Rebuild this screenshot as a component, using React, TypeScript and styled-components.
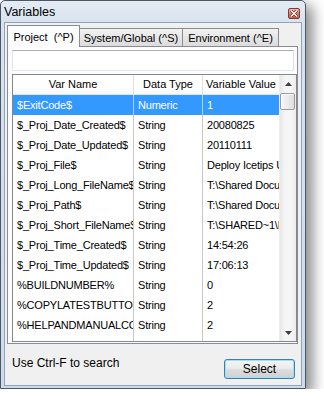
import styled, { createGlobalStyle } from "styled-components";

const GlobalStyle = createGlobalStyle`
    body {
        margin: 0;
        background: #ffffff;
        font-family: "Liberation Sans", Arial, sans-serif;
    }
`;

const Window = styled.div`
    box-sizing: border-box;
    width: 306px;
    height: 389px;
    border: 1px solid #4d5866;
    border-radius: 5px 5px 0 0;
    background: linear-gradient(#e4ebf3, #d8e3ef 22px, #cedbea);
    box-shadow: 6px 6px 14px 1px rgba(0, 0, 0, 0.45);
    padding: 0 3px 2px;
    display: flex;
    flex-direction: column;
`;

const TitleBar = styled.div`
    height: 21px;
    display: flex;
    align-items: center;
    justify-content: space-between;
    padding: 0 2px 0 0;
`;

const Title = styled.span`
    font-size: 12.5px;
    color: #000;
    padding-top: 1px;
`;

const CloseButton = styled.div`
    box-sizing: border-box;
    width: 12px;
    height: 11px;
    margin-top: 3px;
    border: 1px solid #7d3b32;
    border-radius: 2px;
    background: linear-gradient(#e9b8aa, #cf8573 50%, #c06551);
    display: flex;
    align-items: center;
    justify-content: center;
`;

const Client = styled.div`
    flex: 1;
    border: 1px solid #8fa3b9;
    background: #f0f0f0;
    padding: 2px 3px 0 2px;
    display: flex;
    flex-direction: column;
`;

const TabRow = styled.div`
    height: 22px;
    margin-bottom: -1px;
    display: flex;
    align-items: flex-end;
    position: relative;
    z-index: 1;
`;

const Tab = styled.div<{ $active?: boolean; $width: number }>`
    box-sizing: border-box;
    width: ${(p) => p.$width}px;
    height: ${(p) => (p.$active ? 22 : 19)}px;
    margin-left: ${(p) => (p.$active ? 0 : -1)}px;
    border: 1px solid #898c95;
    border-bottom: ${(p) => (p.$active ? "none" : "1px solid #898c95")};
    background: ${(p) => (p.$active ? "#fcfcfc" : "linear-gradient(#f2f2f2, #e6e6e6 50%, #dcdcdc)")};
    font-size: 11px;
    color: #000;
    display: flex;
    align-items: center;
    justify-content: center;
    padding-top: ${(p) => (p.$active ? 0 : 1)}px;
    white-space: pre;
`;

const Panel = styled.div`
    box-sizing: border-box;
    height: 298px;
    border: 1px solid #898c95;
    background: #fcfcfc;
    padding: 3px 0 1px 4px;
    display: flex;
    flex-direction: column;
`;

const SearchBox = styled.div`
    box-sizing: border-box;
    width: 282px;
    height: 21px;
    margin-bottom: 3px;
    border: 1px solid #abadb3;
    border-color: #abadb3 #dbdfe6 #e3e9ef #e2e3ea;
    background: #ffffff;
`;

const List = styled.div`
    box-sizing: border-box;
    width: 285px;
    height: 268px;
    border: 1px solid #828790;
    background: #ffffff;
    display: flex;
`;

const GridArea = styled.div`
    width: 266px;
    display: flex;
    flex-direction: column;
    overflow: hidden;
`;

const columns = "121px 69px 76px";

const HeaderRow = styled.div`
    display: grid;
    grid-template-columns: ${columns};
    height: 20px;
    box-sizing: border-box;
    border-bottom: 1px solid #e5e5e5;
    background: linear-gradient(#ffffff, #ffffff 60%, #f7f8fa);
`;

const HeaderCell = styled.div<{ $last?: boolean }>`
    font-size: 11px;
    line-height: 19px;
    text-align: center;
    color: #000;
    border-right: ${(p) => (p.$last ? "none" : "1px solid #e2e2e2")};
    white-space: nowrap;
    overflow: hidden;
`;

const Rows = styled.div`
    flex: 1;
    overflow: hidden;
`;

const Row = styled.div<{ $selected?: boolean }>`
    display: grid;
    grid-template-columns: ${columns};
    height: 20px;
    background: ${(p) => (p.$selected ? "#3399ff" : "#ffffff")};
    color: ${(p) => (p.$selected ? "#ffffff" : "#000000")};
`;

const Cell = styled.div<{ $selected?: boolean; $last?: boolean }>`
    font-size: 11px;
    line-height: 20px;
    letter-spacing: -0.2px;
    padding-left: 4px;
    white-space: nowrap;
    overflow: hidden;
    border-right: ${(p) => (p.$last ? "none" : `1px solid ${p.$selected ? "#a9d3ff" : "#c8c8c8"}`)};
`;

const ScrollBar = styled.div`
    width: 17px;
    display: flex;
    flex-direction: column;
    background: linear-gradient(to right, #e7e7e7, #f5f5f5 30%, #f5f5f5 70%, #ececec);
    border-left: 1px solid #ededed;
    box-sizing: border-box;
`;

const ScrollButton = styled.div`
    height: 17px;
    display: flex;
    align-items: center;
    justify-content: center;
`;

const Track = styled.div`
    flex: 1;
    padding: 1px 1px 0 0;
`;

const Thumb = styled.div`
    box-sizing: border-box;
    height: 17px;
    border: 1px solid #9b9b9b;
    border-radius: 2px;
    background: linear-gradient(to right, #f6f6f6, #ebebeb 50%, #dedede);
    box-shadow: inset 1px 1px 0 #ffffff;
`;

const Footer = styled.div`
    flex: 1;
    display: flex;
    align-items: flex-start;
    justify-content: space-between;
    padding: 12px 3px 0 5px;
`;

const StatusText = styled.span`
    font-size: 12px;
    line-height: 14px;
    color: #000;
`;

const Button = styled.button`
    box-sizing: border-box;
    width: 71px;
    height: 20px;
    margin-top: 3px;
    border: 1px solid #3c7fb1;
    border-radius: 3px;
    background: linear-gradient(#f4f4f4, #ececec 45%, #dcdcdc 55%, #d0d0d0);
    box-shadow: inset 0 0 0 1px #9fe0f6;
    font-family: "Liberation Sans", Arial, sans-serif;
    font-size: 12px;
    color: #000;
    padding: 0;
`;

type Variable = { name: string; type: string; value: string };

const variables: Variable[] = [
    { name: "$ExitCode$", type: "Numeric", value: "1" },
    { name: "$_Proj_Date_Created$", type: "String", value: "20080825" },
    { name: "$_Proj_Date_Updated$", type: "String", value: "20110111" },
    { name: "$_Proj_File$", type: "String", value: "Deploy Icetips Utilities.sbp" },
    { name: "$_Proj_Long_FileName$", type: "String", value: "T:\\Shared Documents\\Deploy" },
    { name: "$_Proj_Path$", type: "String", value: "T:\\Shared Documents\\" },
    { name: "$_Proj_Short_FileName$", type: "String", value: "T:\\SHARED~1\\DEPLOY~1.SBP" },
    { name: "$_Proj_Time_Created$", type: "String", value: "14:54:26" },
    { name: "$_Proj_Time_Updated$", type: "String", value: "17:06:13" },
    { name: "%BUILDNUMBER%", type: "String", value: "0" },
    { name: "%COPYLATESTBUTTON%", type: "String", value: "2" },
    { name: "%HELPANDMANUALCONFIG%", type: "String", value: "2" },
    { name: "%HELPANDMANUALFILE%", type: "String", value: "..." },
];

function Arrow({ down }: { down?: boolean }) {
    return (
        <svg width="7" height="4" viewBox="0 0 7 4">
            <path d={down ? "M0 0h7L3.5 4z" : "M0 4h7L3.5 0z"} fill="#3d3d3d" />
        </svg>
    );
}

export default function App() {
    return (
        <>
            <GlobalStyle />
            <Window>
                <TitleBar>
                    <Title>Variables</Title>
                    <CloseButton>
                        <svg width="8" height="7" viewBox="0 0 8 7">
                            <path d="M1 0.5l6 6M7 0.5l-6 6" stroke="#5a2820" strokeWidth="2.6" />
                            <path d="M1 0.5l6 6M7 0.5l-6 6" stroke="#ffffff" strokeWidth="1.4" />
                        </svg>
                    </CloseButton>
                </TitleBar>
                <Client>
                    <TabRow>
                        <Tab $active $width={73}>Project  (^P)</Tab>
                        <Tab $width={104}>System/Global (^S)</Tab>
                        <Tab $width={97}>Environment (^E)</Tab>
                    </TabRow>
                    <Panel>
                        <SearchBox />
                        <List>
                            <GridArea>
                                <HeaderRow>
                                    <HeaderCell>Var Name</HeaderCell>
                                    <HeaderCell>Data Type</HeaderCell>
                                    <HeaderCell $last>Variable Value</HeaderCell>
                                </HeaderRow>
                                <Rows>
                                    {variables.map((v, i) => (
                                        <Row key={v.name} $selected={i === 0}>
                                            <Cell $selected={i === 0}>{v.name}</Cell>
                                            <Cell $selected={i === 0}>{v.type}</Cell>
                                            <Cell $selected={i === 0} $last>{v.value}</Cell>
                                        </Row>
                                    ))}
                                </Rows>
                            </GridArea>
                            <ScrollBar>
                                <ScrollButton>
                                    <Arrow />
                                </ScrollButton>
                                <Track>
                                    <Thumb />
                                </Track>
                                <ScrollButton>
                                    <Arrow down />
                                </ScrollButton>
                            </ScrollBar>
                        </List>
                    </Panel>
                    <Footer>
                        <StatusText>Use Ctrl-F to search</StatusText>
                        <Button>Select</Button>
                    </Footer>
                </Client>
            </Window>
        </>
    );
}
